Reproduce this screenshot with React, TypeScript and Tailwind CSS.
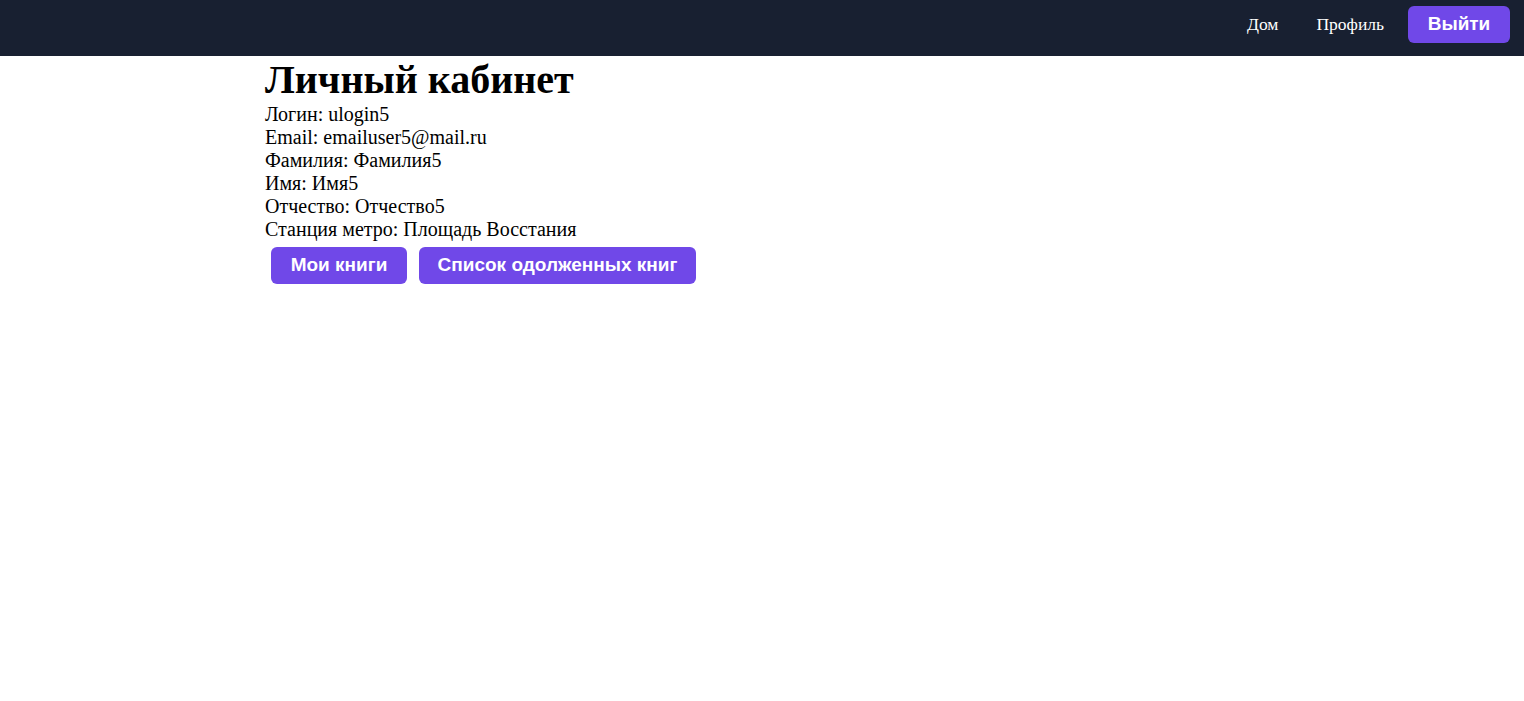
export default function App() {
  return (
    <div className="min-h-screen bg-white" style={{ fontFamily: '"Liberation Serif", serif' }}>
      <header className="h-[56px] bg-[#182031] flex items-start justify-end pr-[14px] pt-[6px]">
        <div className="h-[37px] flex items-center">
          <a className="text-white text-[17.5px] mr-[38px]">Дом</a>
          <a className="text-white text-[17.5px] mr-[24px]">Профиль</a>
        </div>
        <button className="h-[37px] w-[102px] rounded-[6px] bg-[#7048e8] text-white font-bold text-[19px]" style={{ fontFamily: '"Liberation Sans", sans-serif' }}>
          Выйти
        </button>
      </header>
      <main className="w-[994px] mx-auto text-black">
        <h1 className="text-[40px] font-bold leading-[47px]">Личный кабинет</h1>
        <div className="text-[20px] leading-[23px]">
          <p>Логин: ulogin5</p>
          <p>Email: emailuser5@mail.ru</p>
          <p>Фамилия: Фамилия5</p>
          <p>Имя: Имя5</p>
          <p>Отчество: Отчество5</p>
          <p>Станция метро: Площадь Восстания</p>
        </div>
        <div className="flex mt-[6px] ml-[6px] gap-[12px]" style={{ fontFamily: '"Liberation Sans", sans-serif' }}>
          <button className="h-[37px] w-[136px] rounded-[6px] bg-[#7048e8] text-white font-bold text-[19px]">Мои книги</button>
          <button className="h-[37px] w-[277px] rounded-[6px] bg-[#7048e8] text-white font-bold text-[19px]">Список одолженных книг</button>
        </div>
      </main>
    </div>
  );
}
